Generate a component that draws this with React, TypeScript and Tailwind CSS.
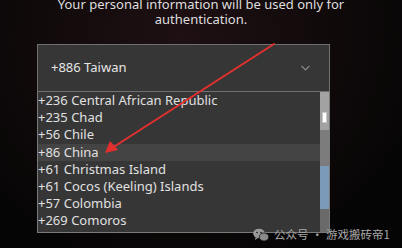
import React from "react";

const countries = [
  { code: "+236", name: "Central African Republic" },
  { code: "+235", name: "Chad" },
  { code: "+56", name: "Chile" },
  { code: "+86", name: "China", active: true },
  { code: "+61", name: "Christmas Island" },
  { code: "+61", name: "Cocos (Keeling) Islands" },
  { code: "+57", name: "Colombia" },
  { code: "+269", name: "Comoros" },
];

const WeChatIcon = () => (
  <svg width="16" height="14" viewBox="0 0 16 14" fill="#9a9a9a">
    <ellipse cx="6" cy="5.5" rx="5.8" ry="4.8" />
    <path d="M2.5 9.5 L2 12 L4.6 10.3 Z" />
    <ellipse cx="11" cy="9" rx="4.8" ry="4" fill="#8a8a8a" stroke="#111" strokeWidth="0.8" />
    <circle cx="4" cy="4.5" r="0.8" fill="#111" />
    <circle cx="8" cy="4.5" r="0.8" fill="#111" />
  </svg>
);

export default function App() {
  return (
    <div
      className="relative w-[402px] h-[248px] overflow-hidden bg-[radial-gradient(ellipse_at_45%_15%,#1e1013_0%,#110a0b_45%,#060505_80%)] text-[#e2e2e2]"
      style={{ fontFamily: '"Noto Sans", "Open Sans", sans-serif' }}
    >
      <div className="flex flex-col">
        <p className="mt-[-3px] text-center text-[13px] leading-[15px] text-[#dedede]">
          Your personal information will be used only for
          <br />
          authentication.
        </p>

        {/* select */}
        <div className="ml-[37px] mt-[17px] w-[293px] h-[48px] flex items-center justify-between border border-[#707070] bg-[#363636] pl-[13px] pr-[19px]">
          <span className="text-[13px] text-[#e4e4e4]">+886 Taiwan</span>
          <svg width="9" height="6" viewBox="0 0 9 6" fill="none" stroke="#8c8c8c" strokeWidth="1.2">
            <path d="M0.5 0.8 L4.5 5 L8.5 0.8" />
          </svg>
        </div>

        {/* dropdown list */}
        <div className="ml-[37px] w-[293px] flex border border-t-0 border-[#7a7a7a] bg-[#363636]">
          <ul className="flex-1 pb-[2px]">
            {countries.map((c) => (
              <li
                key={c.code + c.name}
                className={`h-[17.2px] leading-[17.2px] text-[13px] text-[#e0e0e0] whitespace-nowrap ${
                  c.active ? "bg-[#444444]" : ""
                }`}
              >
                {c.code} {c.name}
              </li>
            ))}
          </ul>
          <div className="w-[9px] flex flex-col">
            <div className="h-[38px] bg-[#a2a2a2] flex justify-center pt-[20px]">
              <div className="w-[5px] h-[11px] bg-white border border-[#c8c8c8]" />
            </div>
            <div className="h-[36px] bg-[#7c7c7c]" />
            <div className="h-[43px] bg-[#7b9ab9]" />
            <div className="flex-1 bg-[#6a6a6a]" />
          </div>
        </div>
      </div>

      {/* red arrow */}
      <svg className="absolute left-0 top-0" width="402" height="248" viewBox="0 0 402 248">
        <line x1="274" y1="44" x2="112" y2="148" stroke="#e3302f" strokeWidth="2" strokeLinecap="round" />
        <polygon points="105,153 110,141 118,150" fill="#e3302f" />
      </svg>

      {/* watermark */}
      <div className="absolute left-[253px] top-[226px] flex items-center gap-[5px] text-[11.5px] text-[#a8a8a8]">
        <WeChatIcon />
        <span style={{ fontFamily: '"Noto Sans CJK SC", "Noto Sans", sans-serif' }}>
          公众号<span className="mx-[3px]">·</span>游戏搬砖帝1
        </span>
      </div>
    </div>
  );
}
